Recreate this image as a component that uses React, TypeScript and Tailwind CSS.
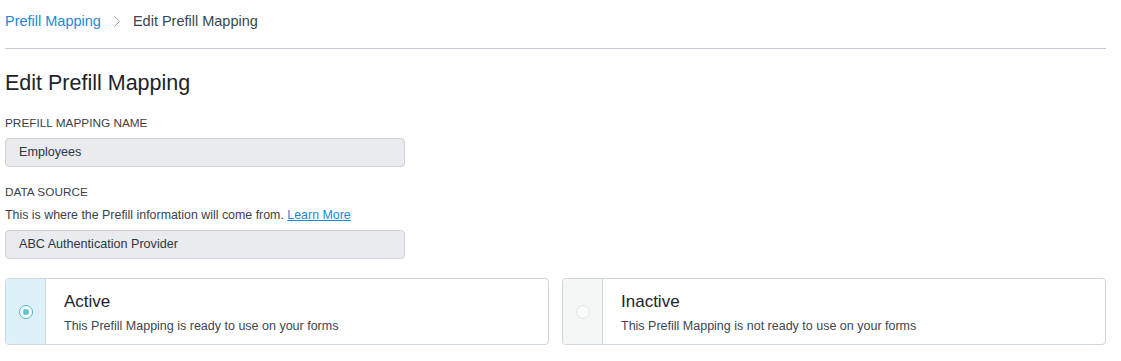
import React from 'react';

const font = { fontFamily: '"Liberation Sans", Arial, sans-serif' };

interface StatusCardProps {
  title: string;
  description: string;
  selected: boolean;
}

const StatusCard: React.FC<StatusCardProps> = ({ title, description, selected }) => (
  <div className="flex h-[67px] flex-1 overflow-hidden rounded-[4px] border border-[#cfd6dc] bg-white">
    <div
      className={`flex w-[40px] shrink-0 items-center justify-center border-r border-[#cfd6dc] ${
        selected ? 'bg-[#dcf2f8]' : 'bg-[#f5f6f6]'
      }`}
    >
      {selected ? (
        <span className="flex h-[14px] w-[14px] items-center justify-center rounded-full border-[1.5px] border-[#4bb6c8] bg-white">
          <span className="h-[6px] w-[6px] rounded-full bg-[#5cc3d2]" />
        </span>
      ) : (
        <span className="h-[14px] w-[14px] rounded-full border border-[#e3e6e8] bg-[#f8f9f9]" />
      )}
    </div>
    <div className="flex flex-col justify-center pl-[18px] pt-[3px]">
      <div className="text-[17px] leading-[20px] text-[#1d2328]">{title}</div>
      <div className="mt-[7px] text-[12.5px] leading-[15px] text-[#3d464f]">{description}</div>
    </div>
  </div>
);

export default function App() {
  return (
    <div className="min-h-[361px] bg-white pl-[5px] pr-[15px]" style={font}>
      <nav className="flex items-center pt-[12px] text-[14.5px] leading-[18px]">
        <span className="text-[#1a8ad4]">Prefill Mapping</span>
        <svg className="mx-[12px] h-[13px] w-[8px]" viewBox="0 0 8 13" fill="none">
          <path d="M1.5 1.5l5 5-5 5" stroke="#9aa3ab" strokeWidth="1" />
        </svg>
        <span className="text-[#3b4550]">Edit Prefill Mapping</span>
      </nav>
      <div className="mt-[18px] border-t border-[#c6ccd2]" />

      <h1 className="mt-[21px] text-[21.5px] leading-[26px] font-medium text-[#1d2328]">Edit Prefill Mapping</h1>

      <div className="mt-[20px] text-[11.8px] leading-[14px] text-[#3b4249]">PREFILL MAPPING NAME</div>
      <div className="mt-[8px] flex h-[29px] w-[400px] items-center rounded-[4px] border border-[#cdd2d6] bg-[#e9ebee] px-[13px] text-[12.6px] text-[#2f3740]">
        Employees
      </div>

      <div className="mt-[18px] text-[11.8px] leading-[14px] text-[#3b4249]">DATA SOURCE</div>
      <div className="mt-[9px] text-[12.4px] leading-[15px] text-[#3b4249]">
        This is where the Prefill information will come from.{' '}
        <a className="text-[#1a8ad4] underline">Learn More</a>
      </div>
      <div className="mt-[7px] flex h-[29px] w-[400px] items-center rounded-[4px] border border-[#cdd2d6] bg-[#e9ebee] px-[13px] text-[12.6px] text-[#2f3740]">
        ABC Authentication Provider
      </div>

      <div className="mt-[19px] flex gap-[13px]">
        <StatusCard title="Active" description="This Prefill Mapping is ready to use on your forms" selected />
        <StatusCard title="Inactive" description="This Prefill Mapping is not ready to use on your forms" selected={false} />
      </div>
    </div>
  );
}
